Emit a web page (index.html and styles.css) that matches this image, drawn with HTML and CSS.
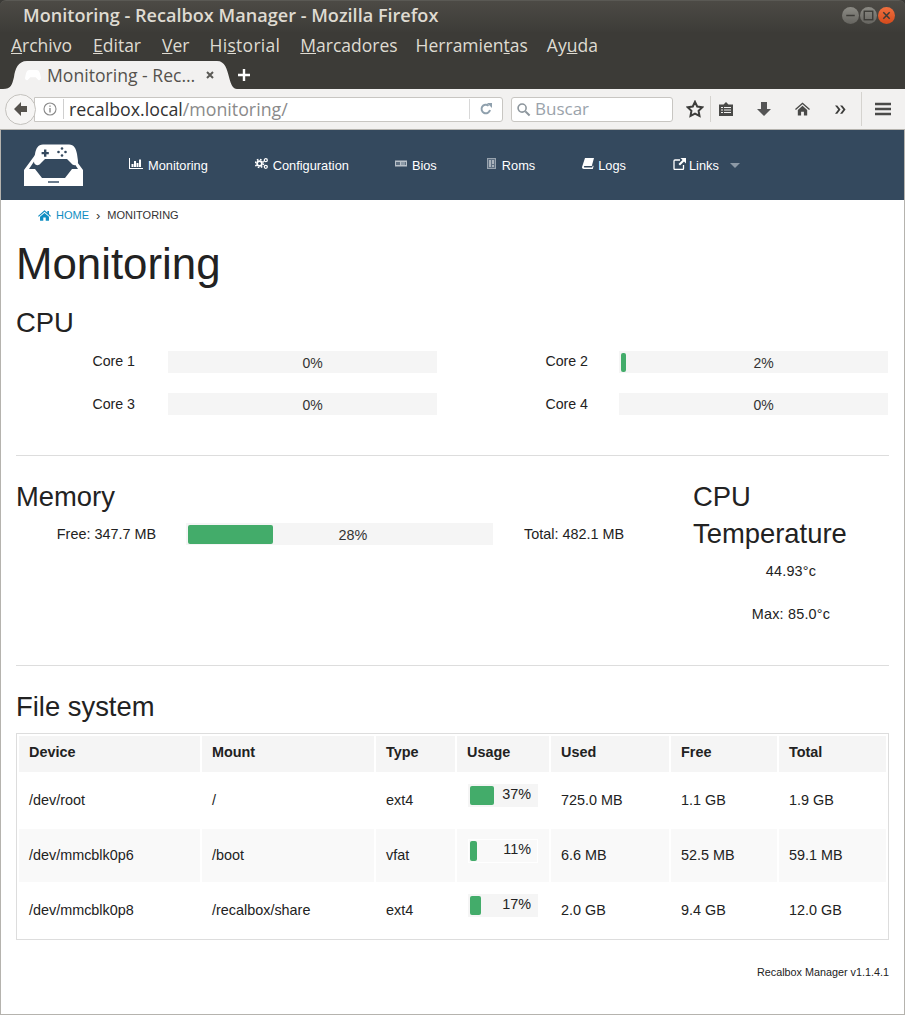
FILE: index.html
```html
<!DOCTYPE html>
<html lang="es">
<head>
<meta charset="utf-8">
<title>Monitoring - Recalbox Manager</title>
<link rel="stylesheet" href="styles.css">
</head>
<body>
<div class="window">
  <header class="chrome">
    <div class="titlebar">
      <span class="title">Monitoring - Recalbox Manager - Mozilla Firefox</span>
      <div class="winbtns">
        <span class="winbtn"><svg viewBox="0 0 16 16"><path d="M4 8h8" stroke="#3c3b37" stroke-width="1.4"/></svg></span>
        <span class="winbtn"><svg viewBox="0 0 16 16"><rect x="4" y="4" width="8" height="8" fill="none" stroke="#3c3b37" stroke-width="1.3"/></svg></span>
        <span class="winbtn close"><svg viewBox="0 0 16 16"><path d="M5 5l6 6M11 5l-6 6" stroke="#3c3b37" stroke-width="1.4"/></svg></span>
      </div>
    </div>
    <nav class="menubar">
      <span><u>A</u>rchivo</span><span class="m2"><u>E</u>ditar</span><span class="m3"><u>V</u>er</span><span class="wide">Hi<u>s</u>torial</span><span><u>M</u>arcadores</span><span class="m6">Herramien<u>t</u>as</span><span class="m7">Ay<u>u</u>da</span>
    </nav>
    <div class="tabbar">
      <div class="tab">
        <svg class="tab-fav" viewBox="0 0 18 13"><path d="M5 1h8c2 0 3 1 4 4l1 5c0 2-2 3-3 2l-3-3H6l-3 3c-1 1-3 0-3-2l1-5c1-3 2-4 4-4z" fill="#fff"/></svg>
        <span class="tab-title">Monitoring - Rec…</span>
        <svg class="tab-x" viewBox="0 0 10 10"><path d="M2 2l6 6M8 2l-6 6" stroke="#5a5a56" stroke-width="2"/></svg>
      </div>
      <svg class="newtab" viewBox="0 0 14 14"><path d="M7 1v12M1 7h12" stroke="#fff" stroke-width="2.4"/></svg>
    </div>
    <div class="toolbar">
      <span class="back"><svg viewBox="0 0 13 14"><path d="M7 0L0 7l7 7v-4h6V4H7z" fill="#55524d"/></svg></span>
      <div class="urlbar">
        <svg class="info" viewBox="0 0 14 14"><circle cx="7" cy="7" r="6" fill="none" stroke="#8a8a8a" stroke-width="1.1"/><path d="M7 6v4.500M7 3.400v1.400" stroke="#8a8a8a" stroke-width="1.400"/></svg>
        <span class="url"><span class="host">recalbox.local</span>/monitoring/</span>
        <span class="reload"><svg viewBox="0 0 14 14"><path d="M11 8a4.300 4.300 0 1 1-1.400-4.300" fill="none" stroke="#8fa0ad" stroke-width="2"/><path d="M8 1h5v5z" fill="#8fa0ad"/></svg></span>
      </div>
      <div class="searchbar">
        <svg viewBox="0 0 16 16"><circle cx="6.500" cy="6.500" r="4.300" fill="none" stroke="#8c959c" stroke-width="1.700"/><path d="M10 10l4.500 4.500" stroke="#8c959c" stroke-width="2.200"/></svg>
        <span>Buscar</span>
      </div>
      <div class="tools">
        <svg class="t-star" viewBox="0 0 18 18"><path d="M9 1.800l2.200 4.700 5.100.7-3.700 3.600.9 5.100L9 13.600l-4.500 2.300.9-5.100-3.700-3.600 5.100-.7z" fill="none" stroke="#3d3d3b" stroke-width="2"/></svg>
        <i class="t-sep s1"></i>
        <svg class="t-list" viewBox="0 0 14 14"><path d="M0 2.500h4.500L7 0l2.500 2.500H14V14H0z" fill="#4a4a48"/><path d="M2 5.500h2M5 5.500h7M2 8h2M5 8h7M2 10.500h2M5 10.500h7" stroke="#f2f1f0" stroke-width="1.100"/></svg>
        <svg class="t-down" viewBox="0 0 14 14"><path d="M4 0h6v7h4l-7 7-7-7h4z" fill="#555"/></svg>
        <svg class="t-home" viewBox="0 0 16 14"><path d="M8 0L0 7l1 1 7-6 7 6 1-1zM8 3.500L3 8v6h3.500v-4h3v4H13V8z" fill="#4a4a48"/></svg>
        <svg class="t-more" viewBox="0 0 12 9"><path d="M0 0l3.500 4.500L0 9h2.500L6 4.500 2.500 0zM5.500 0L9 4.500 5.500 9H8l3.500-4.500L8 0z" fill="#3d3d3b"/></svg>
        <i class="t-sep s2"></i>
        <svg class="t-menu" viewBox="0 0 16 14"><path d="M0 2h16M0 7h16M0 12h16" stroke="#4a4a48" stroke-width="2.600"/></svg>
      </div>
    </div>
  </header>

  <div class="page">
    <nav class="topnav">
      <svg class="logo" viewBox="0 0 59 42">
        <path fill="#fff" d="M0 26L11 11l2 2-8 12h6l7 9h23l7-9h6l-8-12 2-2 11 15v16H0z"/>
        <rect x="24" y="37" width="11" height="2" fill="#6b7c8d"/>
        <path fill="#fff" d="M19 0.500h26c5 0 7 4 8 9.500l1 7c.5 4-4 6-7 2l-4-4H21l-4 4c-3 4-7.500 2-7-2l1-7c1-5.500 3-9.500 8-9.500z"/>
        <path fill="#34495e" d="M20 5.500h2.400v2.400h2.400v2.400h-2.400v2.400H20v-2.400h-2.400V7.900H20z"/>
        <circle cx="38" cy="4.500" r="1.300" fill="#34495e"/><circle cx="34.500" cy="8" r="1.300" fill="#34495e"/><circle cx="41.500" cy="8" r="1.300" fill="#34495e"/><circle cx="38" cy="11.500" r="1.300" fill="#34495e"/>
      </svg>
      <a class="navlink n1"><svg viewBox="0 0 14 11"><path d="M0 0h1v10h13v1H0zM2.500 6h2v3h-2zM5 3h2v6H5zM7.500 5h2v4h-2zM10 1.500h2V9h-2z" fill="#fff"/></svg>Monitoring</a>
      <a class="navlink n2"><svg viewBox="0 0 13 11"><circle cx="4.500" cy="5.500" r="2.400" fill="none" stroke="#fff" stroke-width="1.800"/><circle cx="4.500" cy="5.500" r="4" fill="none" stroke="#fff" stroke-width="1.600" stroke-dasharray="1.600 1.540"/><circle cx="10.800" cy="2.200" r="1.500" fill="none" stroke="#fff" stroke-width="1.300"/><circle cx="10.800" cy="8.800" r="1.500" fill="none" stroke="#fff" stroke-width="1.300"/></svg>Configuration</a>
      <a class="navlink n3"><svg viewBox="0 0 12 7"><rect width="12" height="6" y="0.500" fill="#b9c1c9"/><path d="M1 2h4v3H1zM6.500 2h1v3h-1zM8.500 2h1v3h-1zM10 2h1v3h-1z" fill="#5f7082"/></svg>Bios</a>
      <a class="navlink n4"><svg viewBox="0 0 9 11"><rect x="0.500" y="0.500" width="8" height="10" fill="#5f7082" stroke="#98a3ae"/><rect x="2" y="2" width="2" height="7" fill="#a9b2bb"/><rect x="5" y="2" width="2" height="4" fill="#a9b2bb"/><rect x="5" y="7" width="2" height="2" fill="#a9b2bb"/></svg>Roms</a>
      <a class="navlink n5"><svg viewBox="0 0 12 11"><path d="M3 0h9L9.800 8H2.500c-.8 0-.8 1.400 0 1.400h7.700l.6-1.800.8.300L10.800 11H1.800C.4 11-.3 9.800.2 8.500z" fill="#fff"/></svg>Logs</a>
      <a class="navlink n6"><svg viewBox="0 0 13 12"><path d="M7 2H2a1 1 0 0 0-1 1v7.500a1 1 0 0 0 1 1h7.500a1 1 0 0 0 1-1V7" fill="none" stroke="#fff" stroke-width="1.300"/><path d="M7.500 0H13v5.500l-2-2-4 4-1.500-1.500 4-4z" fill="#fff"/></svg>Links<i class="caret"></i></a>
    </nav>

    <ul class="crumbs">
      <li class="crumb-home"><svg viewBox="0 0 16 13"><path d="M8 0L0 7l1 1 7-6 7 6 1-1-2.500-2.200V1h-2v2zM8 3.400L2.500 8v5h4V9h3v4h4V8z" fill="#0f8ec2"/></svg><a>Home</a></li>
      <li class="sep">›</li>
      <li>Monitoring</li>
    </ul>

    <main class="content">
      <h1>Monitoring</h1>
      <h2 class="cpu-h">CPU</h2>
      <div class="cores">
        <span class="core-l">Core 1</span><div class="bar core-bar"><i class="fill" style="width:0%"></i><span>0%</span></div>
        <span class="core-l">Core 2</span><div class="bar core-bar"><i class="fill" style="width:2%"></i><span>2%</span></div>
        <span class="core-l low">Core 3</span><div class="bar core-bar"><i class="fill" style="width:0%"></i><span>0%</span></div>
        <span class="core-l low">Core 4</span><div class="bar core-bar"><i class="fill" style="width:0%"></i><span>0%</span></div>
      </div>
      <hr>
      <div class="stats">
        <section class="mem">
          <h2>Memory</h2>
          <div class="mem-row">
            <span class="mem-free">Free: 347.7 MB</span>
            <div class="bar mem-bar"><i class="fill" style="width:28%"></i><span>28%</span></div>
            <span class="mem-total">Total: 482.1 MB</span>
          </div>
        </section>
        <section class="temp">
          <h2>CPU Temperature</h2>
          <p class="t-now">44.93°c</p>
          <p class="t-max">Max: 85.0°c</p>
        </section>
      </div>
      <hr class="hr2">
      <h2 class="fs-h">File system</h2>
      <div class="tablewrap">
        <table>
          <colgroup><col class="c1"><col class="c2"><col class="c3"><col class="c4"><col class="c5"><col class="c6"><col class="c7"></colgroup>
          <thead><tr><th>Device</th><th>Mount</th><th>Type</th><th>Usage</th><th>Used</th><th>Free</th><th>Total</th></tr></thead>
          <tbody>
            <tr class="r1"><td>/dev/root</td><td>/</td><td>ext4</td><td><div class="mini"><i class="fill" style="width:37%"></i><span>37%</span></div></td><td>725.0 MB</td><td>1.1 GB</td><td>1.9 GB</td></tr>
            <tr class="r2"><td>/dev/mmcblk0p6</td><td>/boot</td><td>vfat</td><td><div class="mini"><i class="fill" style="width:11%"></i><span>11%</span></div></td><td>6.6 MB</td><td>52.5 MB</td><td>59.1 MB</td></tr>
            <tr class="r3"><td>/dev/mmcblk0p8</td><td>/recalbox/share</td><td>ext4</td><td><div class="mini"><i class="fill" style="width:17%"></i><span>17%</span></div></td><td>2.0 GB</td><td>9.4 GB</td><td>12.0 GB</td></tr>
          </tbody>
        </table>
      </div>
      <footer class="foot">Recalbox Manager v1.1.4.1</footer>
    </main>
  </div>
</div>
</body>
</html>
```

FILE: styles.css
```css
* { box-sizing: border-box; }
html, body { margin: 0; padding: 0; background: #fff; }
body { width: 905px; height: 1015px; overflow: hidden; font-family: "Liberation Sans", Arial, sans-serif; color: #222; }
.window { height: 1015px; display: flex; flex-direction: column; }
.chrome { background: #3c3b37; font-family: "Open Sans", "Noto Sans", sans-serif; }
.titlebar { height: 32px; display: flex; align-items: center; justify-content: space-between; padding: 0 10px 3px 23px; background: linear-gradient(#4c4a45, #3d3c38); border-top: 1px solid #5a5954; border-radius: 6px 6px 0 0; }
.title { font-size: 18.100px; font-weight: 600; color: #dfdbd2; white-space: nowrap; }
.winbtns { display: flex; gap: 1px; margin-top: 1px; }
.winbtn { width: 17px; height: 17px; border-radius: 50%; background: linear-gradient(#8c8b85, #65645f); display: flex; }
.winbtn.close { background: linear-gradient(#f0703f, #d34a1c); }
.winbtn svg { width: 17px; height: 17px; }
.menubar { height: 27px; display: flex; gap: 20px; padding: 0 0 2px 11px; align-items: center; font-size: 17.500px; color: #dfdbd2; }
.m2, .m3 { margin-left: 1px; }
.m6 { margin-left: -2px; }
.m7 { margin-left: -1px; }
.wide { letter-spacing: 0.3px; }
.tabbar { height: 30px; display: flex; align-items: flex-end; padding-left: 3px; }
.tab { width: 234px; height: 28px; background: #f2f1f0; display: flex; align-items: center; padding-left: 22px; color: #55524d; font-size: 17.600px; clip-path: path("M0 28 C8 28 9 24 11 16 C12 8 15 0 24 0 H214 C222 0 224 8 226 16 C228 24 230 28 234 28 Z"); }
.tab-fav { width: 16px; height: 12px; margin-right: 6px; flex: none; }
.tab-title { white-space: nowrap; width: 158px; flex: none; }
.tab-x { width: 10px; height: 10px; flex: none; }
.newtab { width: 14px; height: 14px; margin: 0 0 7px 0; }
.toolbar { height: 41px; background: #f2f1f0; display: flex; align-items: center; padding: 0 0 0 5px; border-bottom: 1px solid #b5b3ae; }
.back { width: 31px; height: 31px; border-radius: 50%; border: 1px solid #c4c2be; background: #f6f5f4; display: flex; align-items: center; justify-content: center; margin-right: -2px; z-index: 1; flex: none; }
.back svg { width: 13px; height: 14px; }
.urlbar { width: 469px; height: 25px; background: #fff; border: 1px solid #c8c6c2; border-radius: 0 3px 3px 0; display: flex; align-items: center; padding-left: 8px; font-size: 17.800px; flex: none; }
.info { width: 14px; height: 14px; flex: none; margin-right: 6px; }
.url { flex: 1; color: #8a8a8a; padding-left: 5px; border-left: 1px solid #cfcfcf; line-height: 20px; white-space: nowrap; }
.host { color: #333; }
.reload { width: 33px; height: 20px; border-left: 1px solid #d8d8d8; display: flex; align-items: center; justify-content: center; flex: none; }
.reload svg { width: 14px; height: 14px; }
.searchbar { width: 162px; height: 25px; margin-left: 8px; background: #fff; border: 1px solid #c8c6c2; border-radius: 3px; display: flex; align-items: center; gap: 4px; padding-left: 4px; font-size: 17px; color: #9aa3ab; flex: none; }
.searchbar span { line-height: 20px; margin-top: -1px; }
.searchbar svg { width: 15px; height: 15px; }
.tools { flex: 1; display: flex; align-items: center; height: 100%; }
.t-star { width: 18px; height: 18px; margin-left: 13px; }
.t-sep { width: 1px; height: 26px; background: #d5d3cf; }
.s1 { margin-left: 6px; }
.t-list { width: 14px; height: 14px; margin-left: 8px; }
.t-down { width: 14px; height: 14px; margin-left: 24px; }
.t-home { width: 15px; height: 14px; margin-left: 24px; }
.t-more { width: 11px; height: 9px; margin-left: 25px; }
.s2 { margin-left: 15px; height: 34px; }
.t-menu { width: 16px; height: 14px; margin-left: 13px; }
.page { flex: 1; border-left: 1px solid #b5b3ae; border-right: 1px solid #b5b3ae; border-bottom: 1px solid #b5b3ae; background: #fff; }
.topnav { height: 70px; background: #34495e; display: flex; align-items: center; padding-left: 23px; color: #fff; font-size: 12.800px; }
.logo { width: 59px; height: 42px; flex: none; margin-right: 46px; margin-top: -1px; }
.navlink { display: flex; align-items: center; color: #fff; white-space: nowrap; margin-right: 47px; }
.navlink svg { flex: none; margin-top: -3px; }
.n1 svg { width: 14px; height: 11px; margin-right: 5px; }
.n2 svg { width: 13px; height: 11px; margin-right: 5px; }
.n2 { margin-right: 46px; }
.n3 svg { width: 12px; height: 7px; margin-right: 5px; }
.n3 { margin-right: 50px; }
.n4 svg { width: 9px; height: 11px; margin-right: 6px; }
.n4 { margin-right: 47px; }
.n5 svg { width: 12px; height: 11px; margin-right: 4px; }
.n5 { margin-right: 47px; }
.n6 svg { width: 13px; height: 12px; margin-right: 3px; }
.caret { width: 0; height: 0; border: 5px solid transparent; border-top: 5px solid #8c99a6; border-bottom: 0; margin-left: 11px; }
.crumbs { list-style: none; margin: 0; height: 30px; padding: 0 0 0 37px; display: flex; align-items: center; font-size: 11px; text-transform: uppercase; color: #333; }
.crumb-home { display: flex; align-items: center; color: #0f8ec2; }
.crumb-home svg { width: 13px; height: 11px; margin-right: 5px; }
.sep { margin: 0 7px; font-size: 13px; }
.content { padding: 0 15px; }
h1 { font-size: 43.800px; font-weight: 400; line-height: 58px; margin: 5px 0 0; color: #222; }
h2 { font-size: 27.400px; font-weight: 400; line-height: 37px; margin: 0; color: #222; }
.cpu-h { margin-top: 11px; }
.cores { display: grid; grid-template-columns: 119px 302px 151px 300px; grid-auto-rows: 22px; row-gap: 20px; margin-top: 10px; font-size: 14.200px; }
.core-l { text-align: right; white-space: nowrap; line-height: 20px; }
.core-l.low { padding-top: 1px; }
.bar { position: relative; height: 22px; padding: 2px 2px 1px; background: #f5f5f5; font-size: 14px; color: #333; }
.bar .fill { display: block; height: 100%; background: #43ac6a; border-radius: 2px; }
.bar span { position: absolute; inset: 0; text-align: center; line-height: 24px; }
.core-bar { margin-left: 33px; width: 269px; }
.core-bar span { padding-left: 20px; }
.cores .core-bar:nth-child(4n) { margin-left: 31px; }
hr { border: 0; border-top: 1px solid #ddd; margin: 40px 0 0; }
.stats { display: flex; height: 209px; }
.mem { width: 677px; padding-top: 22px; }
.mem-row { display: grid; grid-template-columns: 140px 337px 1fr; font-size: 14.400px; align-items: start; margin-top: 8px; }
.mem-free { text-align: right; line-height: 22px; white-space: nowrap; }
.mem-bar { margin-left: 30px; width: 307px; font-size: 14.400px; }
.mem-bar span { padding-left: 27px; }
.mem-total { padding-left: 31px; line-height: 22px; white-space: nowrap; }
.temp { width: 196px; padding-top: 22px; font-size: 14.400px; text-align: center; letter-spacing: 0.2px; }
.temp h2 { text-align: left; letter-spacing: 0; }
.temp p { margin: 0; }
.t-now { padding-top: 11px; }
.t-max { padding-top: 27px; }
.hr2 { margin-top: 0; }
.fs-h { margin-top: 22px; }
.tablewrap { border: 1px solid #ddd; margin-top: 8px; height: 207px; padding-top: 2px; }
table { border-collapse: separate; border-spacing: 2px 0; width: 871px; table-layout: fixed; font-size: 14.400px; color: #222; }
.c1 { width: 181px; } .c2 { width: 172px; } .c3 { width: 79px; } .c4 { width: 92px; } .c5 { width: 118px; } .c6 { width: 106px; } .c7 { width: 107px; }
th { background: #f5f5f5; height: 36px; text-align: left; padding: 0 10px 4px; font-weight: 700; }
td { padding: 0 10px 2px; }
.r1 td { height: 57px; }
.r2 td { height: 53px; background: #f9f9f9; }
.r3 td { height: 57px; }
.mini { position: relative; height: 23px; width: 70px; background: #f5f5f5; margin: 0 0 8px 1px; padding: 2px; }
.r2 .mini { height: 24px; background: #f9f9f9; box-shadow: inset 0 0 0 1px #fff; }
.mini .fill { display: block; height: 100%; background: #43ac6a; border-radius: 2px; }
.mini span { position: absolute; top: 0; right: 7px; line-height: 20px; }
.foot { text-align: right; font-size: 10.800px; margin-top: 26px; color: #222; }
```
